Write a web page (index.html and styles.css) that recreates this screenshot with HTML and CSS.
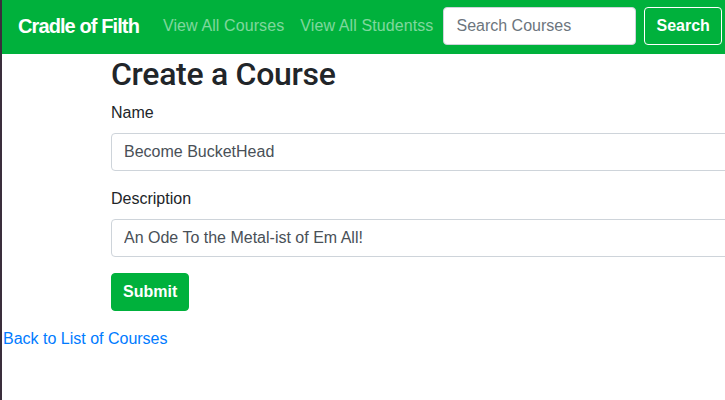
FILE: index.html
```html
<!DOCTYPE html>
<html lang="en">
<head>
<meta charset="utf-8">
<title>Create a Course</title>
<link rel="stylesheet" href="styles.css">
</head>
<body>
  <nav class="navbar">
    <a class="brand" href="#">Cradle of Filth</a>
    <a class="nav-link" href="#">View All Courses</a>
    <a class="nav-link" href="#">View All Studentss</a>
    <form class="search">
      <input class="search-input" type="text" placeholder="Search Courses">
      <button class="search-btn" type="button">Search</button>
    </form>
  </nav>
  <main class="container">
    <h2 class="title">Create a Course</h2>
    <form class="course-form">
      <div class="form-group">
        <label class="label">Name</label>
        <input class="control" type="text" value="Become BucketHead">
      </div>
      <div class="form-group">
        <label class="label">Description</label>
        <input class="control" type="text" value="An Ode To the Metal-ist of Em All!">
      </div>
      <button class="submit" type="button">Submit</button>
    </form>
  </main>
  <a class="back" href="#">Back to List of Courses</a>
</body>
</html>
```

FILE: styles.css
```css
html, body {
  margin: 0;
  padding: 0;
  overflow: hidden;
}
body {
  border-left: 2px solid #3a2e3c;
  min-height: 400px;
  box-sizing: border-box;
  font-family: "Liberation Sans", Arial, sans-serif;
  font-size: 16px;
  line-height: 1.5;
  color: #212529;
  background: #fff;
}
.navbar {
  display: flex;
  align-items: center;
  background: #00b13c;
  padding: 7px 16px 9px 16px;
  white-space: nowrap;
}
.brand {
  color: #fff;
  font-weight: 700;
  font-size: 20px;
  letter-spacing: -0.9px;
  text-decoration: none;
  margin-right: 16px;
  line-height: 1.5;
}
.nav-link {
  color: rgba(255, 255, 255, 0.5);
  text-decoration: none;
  padding: 0 8px;
  letter-spacing: 0.1px;
}
.search {
  display: flex;
  align-items: center;
  margin: 0 0 0 2px;
}
.search-input {
  width: 193px;
  height: 38px;
  box-sizing: border-box;
  border: 1px solid #ced4da;
  border-radius: 4px;
  padding: 6px 12px;
  font-family: inherit;
  font-size: 16px;
  color: #495057;
  margin-right: 8px;
}
.search-input::placeholder {
  color: #6c757d;
}
.search-btn {
  height: 38px;
  box-sizing: border-box;
  background: transparent;
  border: 1px solid #fff;
  border-radius: 4px;
  color: #fff;
  font-family: inherit;
  font-weight: 700;
  font-size: 16px;
  padding: 6px 11px;
}
.container {
  padding-left: 109px;
}
.title {
  margin: 0 0 8px 0;
  padding-top: 1px;
  font-family: Roboto, "Liberation Sans", sans-serif;
  font-size: 32px;
  font-weight: 500;
  line-height: 1.2;
  letter-spacing: -0.3px;
}
.course-form {
  width: 800px;
  margin: 0 0 16px 0;
}
.form-group {
  margin-bottom: 16px;
}
.label {
  display: block;
  margin-bottom: 8px;
}
.control {
  display: block;
  width: 100%;
  height: 38px;
  box-sizing: border-box;
  border: 1px solid #ced4da;
  border-radius: 4px;
  padding: 6px 12px;
  font-family: inherit;
  font-size: 16px;
  color: #495057;
}
.submit {
  height: 38px;
  background: #00b13c;
  border: 1px solid #00b13c;
  border-radius: 4px;
  color: #fff;
  font-family: inherit;
  font-weight: 700;
  font-size: 16px;
  padding: 6px 11px;
}
.back {
  display: inline-block;
  color: #007bff;
  text-decoration: none;
  padding-left: 1px;
}
```
